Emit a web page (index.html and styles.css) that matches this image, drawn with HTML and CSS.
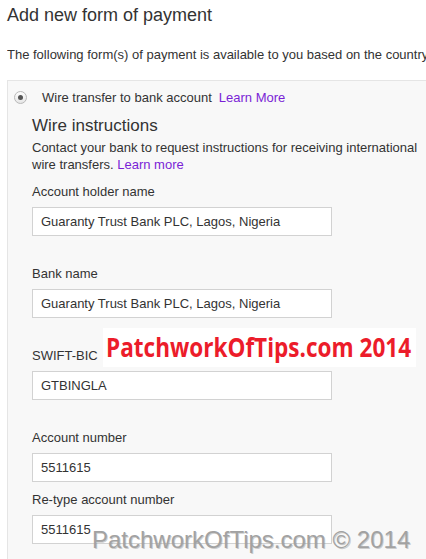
FILE: index.html
```html
<!DOCTYPE html>
<html lang="en">
<head>
    <meta charset="UTF-8">
    <meta name="viewport" content="width=device-width, initial-scale=1.0">
    <title>Add new form of payment</title>
    <link rel="stylesheet" href="styles.css">
</head>
<body>
    <div class="page">
        <h1>Add new form of payment</h1>
        <p class="intro">The following form(s) of payment is available to you based on the country of your payments address.</p>
        <div class="panel">
            <div class="option">
                <span class="radio"><span class="dot"></span></span>
                <span class="option-label">Wire transfer to bank account</span>
                <a class="link" href="#">Learn More</a>
            </div>
            <div class="details">
                <h2>Wire instructions</h2>
                <p class="help">Contact your bank to request instructions for receiving international wire transfers. <a class="link" href="#">Learn more</a></p>
                <div class="field">
                    <label for="holder">Account holder name</label>
                    <input type="text" id="holder" value="Guaranty Trust Bank PLC, Lagos, Nigeria">
                </div>
                <div class="field">
                    <label for="bank">Bank name</label>
                    <input type="text" id="bank" value="Guaranty Trust Bank PLC, Lagos, Nigeria">
                </div>
                <div class="field">
                    <label for="swift">SWIFT-BIC</label>
                    <input type="text" id="swift" value="GTBINGLA">
                </div>
                <div class="field">
                    <label for="account">Account number</label>
                    <input type="text" id="account" value="5511615">
                </div>
                <div class="field retype">
                    <label for="account2">Re-type account number</label>
                    <input type="text" id="account2" value="5511615">
                </div>
            </div>
        </div>
    </div>
    <div class="stamp"><span class="stamp-text">PatchworkOfTips.com 2014</span></div>
    <div class="footer-mark">PatchworkOfTips.com &copy; 2014</div>
</body>
</html>
```

FILE: styles.css
```css
body { font-family: Arial, "Liberation Sans", sans-serif; margin: 0; padding: 0; color: #333; background: #fff; overflow: hidden; height: 559px; position: relative; }
.page { padding: 0 0 0 7px; overflow: hidden; height: 559px; box-sizing: border-box; }
h1 { font-size: 18px; font-weight: normal; line-height: 22px; margin: 4px 0 0 0; color: #333; }
.intro { font-size: 13px; line-height: 16px; margin: 21px 0 0 0; white-space: nowrap; overflow: hidden; }
.panel { margin-top: 17px; height: 479px; box-sizing: border-box; background-color: #f8f8f8; border: 1px solid #e5e5e5; border-right: none; border-bottom: none; }
.option { display: flex; align-items: center; height: 16px; padding: 8px 0 0 6px; font-size: 13px; }
.radio { width: 11px; height: 11px; border: 1px solid #b9b9b9; border-radius: 50%; background: linear-gradient(#fdfdfd, #e6e6e6); display: flex; align-items: center; justify-content: center; margin-right: 15px; }
.dot { width: 5px; height: 5px; border-radius: 50%; background-color: #555; }
.option-label { margin-right: 7px; }
.link { color: #7a1fd6; text-decoration: none; }
.details { padding-left: 24px; }
h2 { font-size: 17px; font-weight: normal; line-height: 20px; margin: 11px 0 0 0; color: #333; }
.help { font-size: 13px; line-height: 17px; margin: 3px 0 0 0; width: 395px; }
.field { margin-top: 30px; }
.field:first-of-type { margin-top: 11px; }
.field.retype { margin-top: 10px; }
label { display: block; font-size: 13px; line-height: 16px; margin-bottom: 7px; }
input { display: block; box-sizing: border-box; width: 300px; height: 29px; margin: 0; padding: 0 8px; border: 1px solid #d2d2d2; border-radius: 0; background: #fff; font-family: Arial, "Liberation Sans", sans-serif; font-size: 13px; color: #333; outline: none; }
.stamp { position: absolute; left: 103px; top: 328px; width: 313px; height: 39px; background: #fff; padding-left: 3px; box-sizing: border-box; overflow: hidden; }
.stamp-text { display: inline-block; color: #ec1c2a; font-family: "Open Sans", sans-serif; font-weight: 700; font-size: 27px; line-height: 38px; white-space: nowrap; transform: scaleX(0.835); transform-origin: left center; }
.footer-mark { position: absolute; left: 92px; top: 526px; font-family: Arial, "Liberation Sans", sans-serif; font-size: 24px; line-height: 28px; color: #a2a2a2; white-space: nowrap; text-shadow: 1px 1px 0 rgba(120, 120, 120, 0.35); }
```
